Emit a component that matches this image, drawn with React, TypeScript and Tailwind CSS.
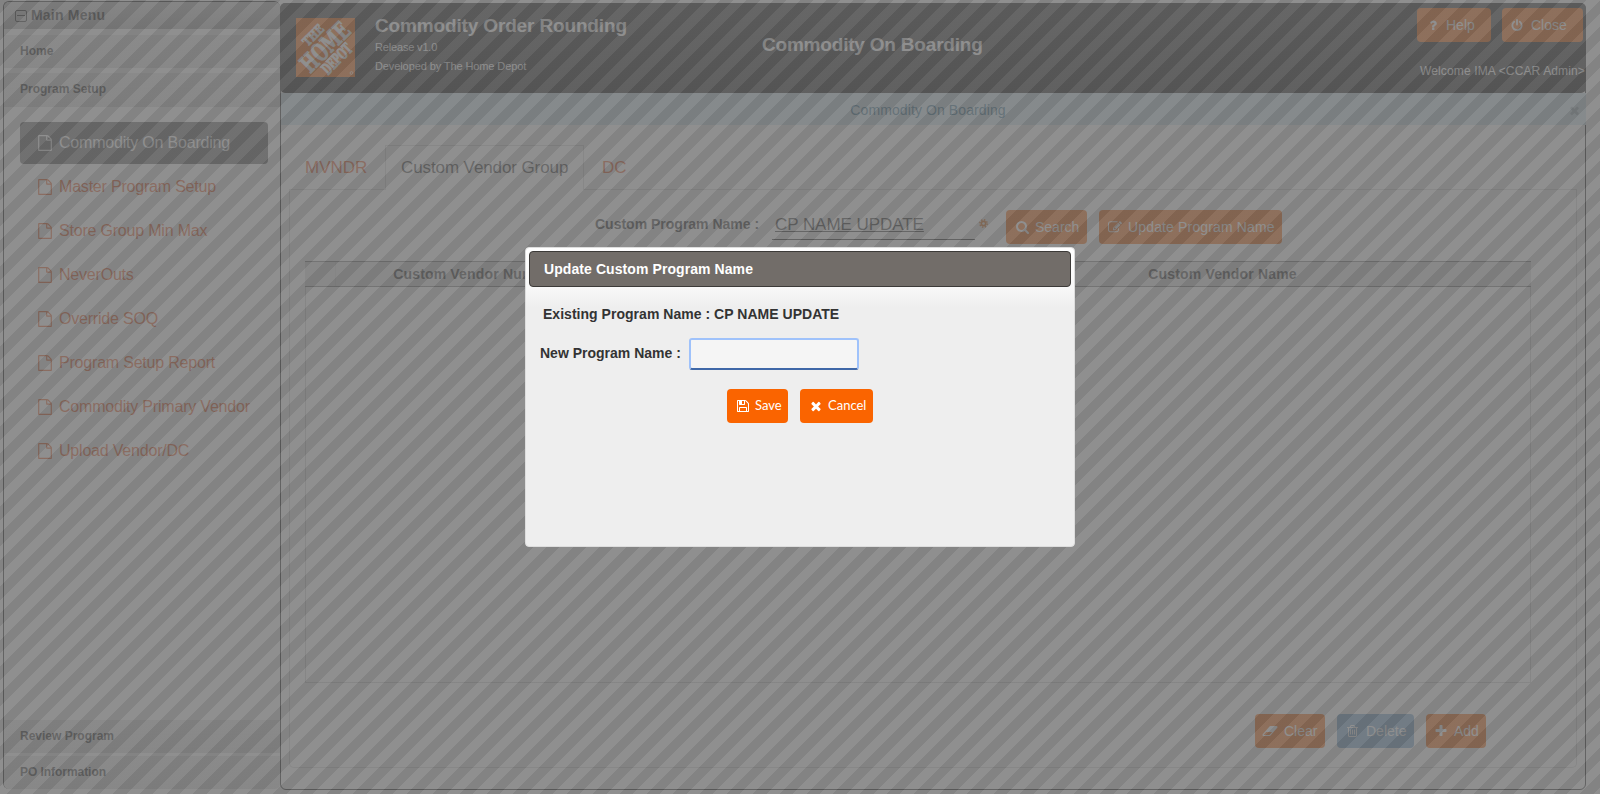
import React from "react";

const ICONS = {
  file: { box: "0 0 1536 1792", d: "M1468 380q28 28 48 76t20 88v1152q0 40-28 68t-68 28h-1344q-40 0-68-28t-28-68v-1600q0-40 28-68t68-28h896q40 0 88 20t76 48zm-444-244v376h376q-10-29-22-41l-313-313q-12-12-41-22zm384 1528v-1024h-416q-40 0-68-28t-28-68v-416h-768v1536h1280z" },
  times: { box: "0 0 1792 1792", d: "M1490 1322q0 40-28 68l-136 136q-28 28-68 28t-68-28l-294-294-294 294q-28 28-68 28t-68-28l-136-136q-28-28-28-68t28-68l294-294-294-294q-28-28-28-68t28-68l136-136q28-28 68-28t68 28l294 294 294-294q28-28 68-28t68 28l136 136q28 28 28 68t-28 68l-294 294 294 294q28 28 28 68z" },
  plus: { box: "0 0 1792 1792", d: "M1600 736v192q0 40-28 68t-68 28h-416v416q0 40-28 68t-68 28h-192q-40 0-68-28t-28-68v-416h-416q-40 0-68-28t-28-68v-192q0-40 28-68t68-28h416v-416q0-40 28-68t68-28h192q40 0 68 28t28 68v416h416q40 0 68 28t28 68z" },
  save: { box: "128 128 1536 1536", d: "M512 1536h768v-384h-768v384zm896 0h128v-896q0-14-10-38.5t-20-34.5l-281-281q-10-10-34-20t-39-10v416q0 40-28 68t-68 28h-576q-40 0-68-28t-28-68v-416h-128v1280h128v-416q0-40 28-68t68-28h832q40 0 68 28t28 68v416zm-384-928v-320q0-13-9.5-22.5t-22.5-9.5h-192q-13 0-22.5 9.5t-9.5 22.5v320q0 13 9.5 22.5t22.5 9.5h192q13 0 22.5-9.5t9.5-22.5zm640 32v928q0 40-28 68t-68 28h-1344q-40 0-68-28t-28-68v-1344q0-40 28-68t68-28h928q40 0 88 20t76 48l280 280q28 28 48 76t20 88z" },
  search: { box: "64 128 1664 1664", d: "M1216 832q0-185-131.5-316.5t-316.5-131.5-316.5 131.5-131.5 316.5 131.5 316.5 316.5 131.5 316.5-131.5 131.5-316.5zm512 832q0 52-38 90t-90 38q-54 0-90-38l-343-342q-179 124-399 124-143 0-273.5-55.5t-225-150-150-225-55.5-273.5 55.5-273.5 150-225 225-150 273.5-55.5 273.5 55.5 225 150 150 225 55.5 273.5q0 220-124 399l343 343q37 37 37 90z" },
  power: { box: "64 0 1664 1664", d: "M1664 896q0 156-61 298t-164 245-245 164-298 61-298-61-245-164-164-245-61-298q0-182 80.5-343t226.5-270q43-32 95.5-25t83.5 50q32 42 24.5 94.5t-49.5 84.5q-98 74-151.5 181t-53.5 228q0 104 40.5 198.5t109.5 163.5 163.5 109.5 198.5 40.5 198.5-40.5 163.5-109.5 109.5-163.5 40.5-198.5q0-121-53.5-228t-151.5-181q-42-32-49.5-84.5t24.5-94.5q31-43 84-50t95 25q146 109 226.5 270t80.5 343zm-640-768v640q0 52-38 90t-90 38-90-38-38-90v-640q0-52 38-90t90-38 90 38 38 90z" },
  trash: { box: "192 128 1408 1536", d: "M704 736v576q0 14-9 23t-23 9h-64q-14 0-23-9t-9-23v-576q0-14 9-23t23-9h64q14 0 23 9t9 23zm256 0v576q0 14-9 23t-23 9h-64q-14 0-23-9t-9-23v-576q0-14 9-23t23-9h64q14 0 23 9t9 23zm256 0v576q0 14-9 23t-23 9h-64q-14 0-23-9t-9-23v-576q0-14 9-23t23-9h64q14 0 23 9t9 23zm128 724v-948h-896v948q0 22 7 40.5t14.5 27 10.5 8.5h832q3 0 10.5-8.5t14.5-27 7-40.5zm-672-1076h448l-48-117q-7-9-17-11h-317q-10 2-17 11zm928 32v64q0 14-9 23t-23 9h-96v948q0 83-47 143.5t-113 60.5h-832q-66 0-113-58.5t-47-141.5v-952h-96q-14 0-23-9t-9-23v-64q0-14 9-23t23-9h309l70-167q15-37 54-63t79-26h320q40 0 79 26t54 63l70 167h309q14 0 23 9t9 23z" },
  edit: { box: "0 100 1792 1540", d: "M888 1184l116-116-152-152-116 116v56h96v96h56zm440-720q-16-16-33 1l-350 350q-17 17-1 33t33-1l350-350q17-17 1-33zm80 594v190q0 119-84.5 203.5t-203.5 84.5h-832q-119 0-203.5-84.5t-84.5-203.5v-832q0-119 84.5-203.5t203.5-84.5h832q63 0 117 25 15 7 18 23 3 17-9 29l-49 49q-14 14-32 8-23-6-45-6h-832q-66 0-113 47t-47 113v832q0 66 47 113t113 47h832q66 0 113-47t47-113v-126q0-13 9-22l64-64q15-15 35-7t20 29zm-96-738l288 288-672 672h-288v-288zm444 132l-92 92-288-288 92-92q28-28 68-28t68 28l152 152q28 28 28 68t-28 68z" },
  eraser: { box: "60 256 1930 1280", d: "M960 1408l336-384h-768l-336 384h768zm1013-1077q15 34 9.5 71.5t-30.5 65.5l-896 1024q-38 44-96 44h-768q-38 0-69.5-20.5t-47.5-54.5q-15-34-9.5-71.5t30.5-65.5l896-1024q38-44 96-44h768q38 0 69.5 20.5t47.5 54.5z" },
  question: { box: "384 192 1024 1344", d: "M1088 1256v240q0 16-12 28t-28 12h-240q-16 0-28-12t-12-28v-240q0-16 12-28t28-12h240q16 0 28 12t12 28zm316-600q0 54-15.5 101t-35 76.5-55 59.5-57.5 43.5-61 35.5q-41 23-68.5 65t-27.5 67q0 17-12 32.5t-28 15.5h-240q-15 0-25.5-18.5t-10.5-37.5v-45q0-83 65-156.5t143-108.5q59-27 84-56t25-76q0-42-46.5-74t-107.5-32q-65 0-108 29-35 25-107 115-13 16-31 16-12 0-25-8l-164-125q-13-10-15.5-25t5.5-28q160-266 464-266 80 0 161 31t146 83 106 127.5 41 158.5z" },
};

function Icon({ name, className }: { name: keyof typeof ICONS; className: string }) {
  return (
    <svg viewBox={ICONS[name].box} className={`shrink-0 fill-current ${className}`} aria-hidden="true">
      <path d={ICONS[name].d} />
    </svg>
  );
}

function Button({ icon, iconClass, label, className }: { icon: keyof typeof ICONS; iconClass: string; label: string; className: string }) {
  return (
    <button className={`flex h-[34px] shrink-0 items-center rounded-[4px] text-white ${className}`}>
      <Icon name={icon} className={iconClass} />
      <span className="whitespace-nowrap">{label}</span>
    </button>
  );
}

const MENU = [
  "Commodity On Boarding",
  "Master Program Setup",
  "Store Group Min Max",
  "NeverOuts",
  "Override SOQ",
  "Program Setup Report",
  "Commodity Primary Vendor",
  "Upload Vendor/DC",
];

function AccordionRow({ label, className }: { label: string; className: string }) {
  return (
    <div className={`flex items-center bg-linear-to-b from-[#e6e6e6] to-[#dadada] pb-[2px] pl-4 text-[12px] font-bold text-[#333] ${className}`}>
      {label}
    </div>
  );
}

function Sidebar() {
  return (
    <aside className="mt-px flex h-[788px] w-[277px] shrink-0 flex-col rounded-[6px] border-l border-t border-[#222]">
      <div className="flex h-[27px] items-center gap-[4px] rounded-t-[5px] bg-linear-to-b from-[#d0d0d0] to-[#b0b0b0] pl-[11px] text-[14px] font-bold text-[#222]">
        <svg viewBox="0 0 12 12" className="size-[12px] fill-none stroke-current">
          <rect x="0.5" y="0.5" width="11" height="11" rx="1.5" />
          <path d="M2 5.5h8" />
        </svg>
        <span className="tracking-[0.2px]">Main Menu</span>
      </div>
      <AccordionRow label="Home" className="mt-[6px] h-[33px]" />
      <AccordionRow label="Program Setup" className="mt-[5px] h-[34px]" />
      <nav className="mt-[15px] flex flex-1 flex-col gap-[2px] pl-4 pr-3">
        {MENU.map((label, i) => (
          <a
            key={label}
            className={`flex h-[42px] items-center gap-[7px] rounded-[4px] pl-[18px] text-[16px] tracking-[-0.2px] ${i === 0 ? "bg-[#666] text-white" : "text-[#e8541a]"}`}
          >
            <Icon name="file" className="h-[16px] w-[14px]" />
            <span className="whitespace-nowrap">{label}</span>
          </a>
        ))}
      </nav>
      <AccordionRow label="Review Program" className="h-[33px]" />
      <AccordionRow label="PO Information" className="mt-[3px] h-[33px] rounded-b-[5px] tracking-[-0.05px]" />
    </aside>
  );
}

function Logo() {
  return (
    <svg viewBox="0 0 59 59" className="size-[59px] shrink-0 overflow-visible">
      <rect width="59" height="59" fill="#f96302" />
      <g transform="rotate(-45 29.5 29.5)" fill="#fff" stroke="#fff" strokeWidth="0.9" fontFamily="DejaVu Serif, serif" fontWeight="700">
        <text x="17.5" y="16.5" fontSize="12.5" textLength="24" lengthAdjust="spacingAndGlyphs">THE</text>
        <text x="0" y="37.5" fontSize="24.5" textLength="59" lengthAdjust="spacingAndGlyphs">HOME</text>
        <text x="11.5" y="51" fontSize="15.5" textLength="36" lengthAdjust="spacingAndGlyphs">DEPOT</text>
      </g>
      <circle cx="55.5" cy="55" r="1.4" fill="none" stroke="#fff" strokeWidth="0.7" />
    </svg>
  );
}

function Header() {
  return (
    <header className="-mx-px -mt-px flex h-[90px] rounded-[5px] bg-linear-to-b from-[#333] to-[#161616] text-white">
      <div className="flex w-[460px] gap-[20px] pl-[16px] pt-[15px]">
        <Logo />
        <div className="-mt-[4px] flex flex-col whitespace-nowrap">
          <h1 className="text-[19px] font-bold leading-[24px] tracking-[-0.15px]">Commodity Order Rounding</h1>
          <p className="text-[11px] leading-[19px] tracking-[-0.17px]">Release v1.0</p>
          <p className="text-[11px] leading-[19px] tracking-[-0.1px]">Developed by The Home Depot</p>
        </div>
      </div>
      <h2 className="w-[270px] pl-[22px] pt-[30px] text-[19px] font-bold leading-[24px] tracking-[-0.2px] whitespace-nowrap">Commodity On Boarding</h2>
      <div className="ml-auto flex flex-col items-end pt-[5px]">
        <div className="flex gap-[11px] pr-[3px]">
          <Button icon="question" iconClass="ml-[12px] mr-[9px] h-[10px] w-[8px]" label="Help" className="w-[74px] bg-[#f96302] text-[14px]" />
          <Button icon="power" iconClass="ml-[9px] mr-[8px] size-[12px]" label="Close" className="w-[81px] bg-[#f96302] text-[14px]" />
        </div>
        <p className="mt-[20px] pr-px text-[12px] leading-[18px] tracking-[0.13px]">Welcome IMA &lt;CCAR Admin&gt;</p>
      </div>
    </header>
  );
}

function Grid() {
  return (
    <div className="ml-[15px] mt-[17px] h-[422px] w-[1226px] border border-[#cfcfcf]">
      <div className="-mx-px -mt-px flex h-[26px] items-center border-y border-[#777] bg-[#dcdcdc] text-[14px] font-bold tracking-[0.17px] text-[#333]">
        <div className="h-full w-[31px] border-r border-[#ccc]" />
        <div className="w-[278px] text-center">Custom Vendor Number</div>
        <div className="w-[300px]" />
        <div className="flex-1 text-center">Custom Vendor Name</div>
      </div>
    </div>
  );
}

function Workspace() {
  return (
    <main className="mt-[3px] flex h-[787px] w-[1306px] flex-col rounded-[6px] border border-[#222]">
      <Header />
      <div className="-mr-px flex h-[32px] items-center justify-center bg-[#d0e6f0] text-[14px] text-[#31708f]">
        <span className="ml-[7px] flex-1 pt-[2px] text-center tracking-[0.1px]">Commodity On Boarding</span>
        <Icon name="times" className="mr-[5px] mt-[3px] size-[13px] text-[#9fb4be]" />
      </div>
      <div className="ml-[8px] mt-[20px] flex h-[45px] w-[1288px] text-[17px] text-[#e8541a]">
        <div className="flex w-[96px] items-center border-b border-[#d6d6d6] pl-[16px] pt-px">MVNDR</div>
        <div className="flex w-[199px] items-center border border-b-0 border-[#d6d6d6] pl-[15px] tracking-[-0.1px] text-[#444] whitespace-nowrap">Custom Vendor Group</div>
        <div className="flex flex-1 items-center border-b border-[#d6d6d6] pl-[18px] pt-px">DC</div>
      </div>
      <section className="ml-[8px] h-[578px] w-[1288px] rounded-b-[5px] border border-t-0 border-[#d6d6d6]">
        <div className="flex h-[54px] items-start pl-[305px] pt-[20px]">
          <label className="mt-[5px] w-[177px] text-[14px] font-bold leading-[18px] text-[#333] whitespace-nowrap">Custom Program Name :</label>
          <div className="h-[30px] w-[203px] border-b border-[#222] pl-[3px] text-[17px] leading-[29px] tracking-[-0.05px] text-[#333] underline">CP NAME UPDATE</div>
          <svg viewBox="0 0 10 10" className="ml-[4px] mt-[9px] size-[9px] shrink-0 fill-none stroke-[#e8741a]">
            <circle cx="5" cy="5" r="2.4" strokeWidth="1.8" />
            <circle cx="5" cy="5" r="4.1" strokeWidth="1.6" strokeDasharray="1.61 1.61" />
          </svg>
          <Button icon="search" iconClass="ml-[10px] mr-[6px] size-[13px]" label="Search" className="ml-[18px] w-[81px] bg-[#f96302] text-[14px]" />
          <Button icon="edit" iconClass="ml-[9px] mr-[6px] h-[12px] w-[14px]" label="Update Program Name" className="ml-[12px] w-[183px] bg-[#f96302] text-[14px] tracking-[0.15px]" />
        </div>
        <Grid />
        <div className="mt-[31px] flex gap-[12px] pl-[965px] text-[14px]">
          <Button icon="eraser" iconClass="ml-[7px] mr-[6px] h-[10px] w-[16px]" label="Clear" className="w-[70px] bg-[#f96302]" />
          <Button icon="trash" iconClass="ml-[10px] mr-[8px] h-[12px] w-[11px]" label="Delete" className="w-[77px] bg-[#6ea0cc]" />
          <Button icon="plus" iconClass="ml-[8px] mr-[6px] size-[14px]" label="Add" className="w-[60px] bg-[#f96302]" />
        </div>
      </section>
    </main>
  );
}

function Dialog() {
  return (
    <div role="dialog" className="absolute left-[525px] top-[247px] h-[300px] w-[550px] rounded-[4px] border border-[#ddd] bg-[#eee] bg-[linear-gradient(to_bottom,#fff_0px,#f8f8f8_40px,#eee_60px)] p-[3px] text-[14px]">
      <div className="flex h-[36px] items-center rounded-[4px] border border-[#3c3a38] bg-[#726d69] pl-[14px] font-bold tracking-[0.08px] text-white">
        Update Custom Program Name
      </div>
      <div className="pl-[14px] pt-[18px] font-bold leading-[18px] tracking-[0.03px] text-[#333]">Existing Program Name : CP NAME UPDATE</div>
      <div className="mt-[15px] flex items-center pl-[11px]">
        <label className="w-[149px] pb-[2px] font-bold text-[#333]">New Program Name :</label>
        <input className="h-[32px] w-[170px] rounded-[3px] border-2 border-[#9fc2fb] border-b-[#3f68a8] bg-[#f5f5f5]" />
      </div>
      <div className="mt-[19px] flex gap-[12px] pl-[198px] font-[Lato] text-[13px]">
        <Button icon="save" iconClass="ml-[10px] mr-[6px] size-[12px]" label="Save" className="w-[61px] bg-[#fa6400]" />
        <Button icon="times" iconClass="ml-[9px] mr-[5px] size-[14px]" label="Cancel" className="w-[73px] bg-[#fa6400]" />
      </div>
    </div>
  );
}

export default function App() {
  return (
    <div className="relative h-[794px] w-[1600px] overflow-hidden bg-white font-['Liberation_Sans',Arial,sans-serif]">
      <div className="flex pl-[3px]">
        <Sidebar />
        <Workspace />
      </div>
      <div className="absolute inset-0 bg-[repeating-linear-gradient(135deg,#646464_0px,#646464_9.43px,#737373_9.43px,#737373_18.86px)] opacity-80" />
      <Dialog />
    </div>
  );
}
